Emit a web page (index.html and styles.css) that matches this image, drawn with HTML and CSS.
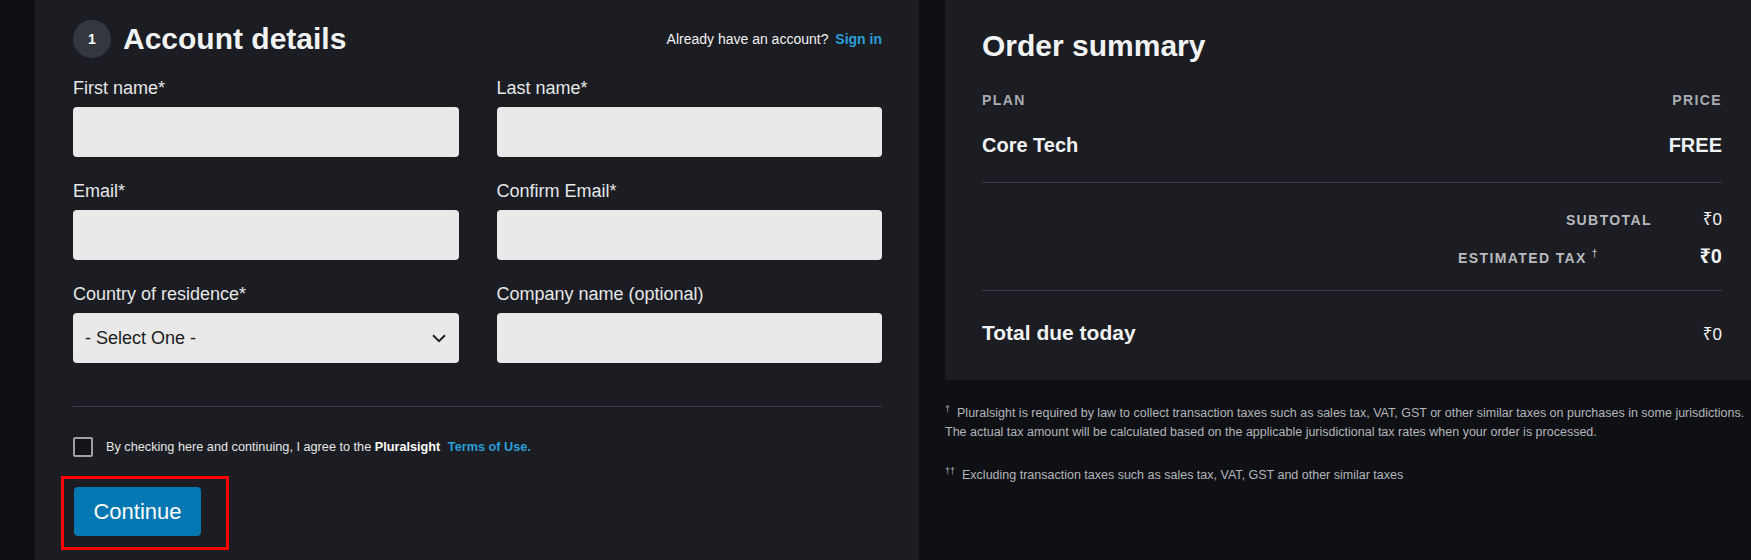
FILE: index.html
```html
<!DOCTYPE html>
<html lang="en">
<head>
    <meta charset="UTF-8">
    <title>Checkout - Account details</title>
    <link rel="stylesheet" href="styles.css">
</head>
<body>
    <div class="page">
        <section class="account">
            <div class="account-head">
                <h2 class="step-title"><span class="step-num">1</span>Account details</h2>
                <p class="signin-hint">Already have an account? <a href="#">Sign in</a></p>
            </div>
            <form class="account-form">
                <div class="fields">
                    <div class="field">
                        <label>First name*</label>
                        <input type="text">
                    </div>
                    <div class="field">
                        <label>Last name*</label>
                        <input type="text">
                    </div>
                    <div class="field">
                        <label>Email*</label>
                        <input type="text">
                    </div>
                    <div class="field">
                        <label>Confirm Email*</label>
                        <input type="text">
                    </div>
                    <div class="field">
                        <label>Country of residence*</label>
                        <div class="select">
                            <span>- Select One -</span>
                            <svg width="14" height="9" viewBox="0 0 14 9"><path d="M1 1.2 L7 7.2 L13 1.2" fill="none" stroke="#1d1f23" stroke-width="2"/></svg>
                        </div>
                    </div>
                    <div class="field">
                        <label>Company name (optional)</label>
                        <input type="text">
                    </div>
                </div>
                <hr class="divider">
                <div class="agree">
                    <span class="checkbox"></span>
                    <span>By checking here and continuing, I agree to the <strong>Pluralsight</strong> <a href="#">Terms of Use.</a></span>
                </div>
                <div class="highlight">
                    <button type="button" class="btn-continue">Continue</button>
                </div>
            </form>
        </section>
        <aside class="summary-col">
            <div class="summary">
                <h2>Order summary</h2>
                <div class="summary-head">
                    <span>PLAN</span>
                    <span>PRICE</span>
                </div>
                <div class="plan-row">
                    <span>Core Tech</span>
                    <span>FREE</span>
                </div>
                <div class="totals">
                    <div class="total-line">
                        <span class="label">SUBTOTAL</span>
                        <span class="amount">₹0</span>
                    </div>
                    <div class="total-line tax">
                        <span class="label">ESTIMATED TAX<sup>†</sup></span>
                        <span class="amount">₹0</span>
                    </div>
                </div>
                <div class="total-row">
                    <span>Total due today</span>
                    <span class="amount">₹0</span>
                </div>
            </div>
            <div class="notes">
                <p><sup>†</sup>Pluralsight is required by law to collect transaction taxes such as sales tax, VAT, GST or other similar taxes on purchases in some jurisdictions.<br>The actual tax amount will be calculated based on the applicable jurisdictional tax rates when your order is processed.</p>
                <p><sup>††</sup>Excluding transaction taxes such as sales tax, VAT, GST and other similar taxes</p>
            </div>
        </aside>
    </div>
</body>
</html>
```

FILE: styles.css
```css
* {
    box-sizing: border-box;
}
body {
    margin: 0;
    background: #0f1014;
    font-family: "Liberation Sans", "Noto Sans", "DejaVu Sans", sans-serif;
    color: #e8e9ea;
    overflow: hidden;
}
.page {
    display: flex;
    align-items: flex-start;
    height: 560px;
    padding-left: 35px;
}

/* left: account form */
.account {
    flex: 0 0 884px;
    height: 560px;
    background: #1b1d22;
    padding: 20px 37px 0 38px;
}
.account-head {
    display: flex;
    justify-content: space-between;
    align-items: center;
    height: 38px;
}
.step-title {
    display: flex;
    align-items: center;
    gap: 12px;
    margin: 0;
    font-size: 30px;
    line-height: 38px;
    color: #f1f2f3;
}
.step-num {
    width: 38px;
    height: 38px;
    border-radius: 50%;
    background: #33383f;
    display: flex;
    align-items: center;
    justify-content: center;
    font-size: 14px;
    color: #fff;
}
.signin-hint {
    margin: 0;
    font-size: 14px;
    color: #f2f2f2;
}
.signin-hint a {
    color: #2a9fd8;
    font-weight: bold;
    text-decoration: none;
    margin-left: 3px;
}
.fields {
    display: grid;
    grid-template-columns: 1fr 1fr;
    column-gap: 38px;
    row-gap: 24px;
    margin-top: 20px;
}
.field label {
    display: block;
    font-size: 18px;
    line-height: 20px;
    margin-bottom: 9px;
    color: #e6e7e8;
}
.field input,
.select {
    display: block;
    width: 100%;
    height: 50px;
    border: 0;
    border-radius: 4px;
    background: #e8e9e8;
}
.select {
    display: flex;
    align-items: center;
    justify-content: space-between;
    padding: 0 13px 0 12px;
    font-size: 18px;
    color: #1b1d22;
}
.divider {
    border: 0;
    border-top: 1px solid #3a3d44;
    margin: 43px 0 0;
}
.agree {
    display: flex;
    align-items: center;
    gap: 13px;
    margin-top: 30px;
    font-size: 12.7px;
    color: #e6e7e8;
}
.checkbox {
    width: 20px;
    height: 20px;
    border: 2px solid #9fa1a4;
    border-radius: 2px;
    background: #131418;
}
.agree strong {
    color: #fff;
    margin-right: 4px;
}
.agree a {
    color: #2a9fd8;
    font-weight: bold;
    text-decoration: none;
}
.highlight {
    display: inline-block;
    margin: 19px 0 0 -12px;
    border: 3px solid #ff0000;
    padding: 8px 25px 11px 10px;
}
.btn-continue {
    display: block;
    width: 127px;
    height: 49px;
    border: 0;
    border-radius: 4px;
    background: #0277b1;
    color: #fff;
    font-family: inherit;
    font-size: 22px;
}

/* right: order summary */
.summary-col {
    flex: 0 0 814px;
    margin-left: 26px;
}
.summary {
    background: #1b1d22;
    padding: 28px 37px 33px;
    border-radius: 0 0 4px 4px;
}
.summary h2 {
    margin: 0;
    font-size: 30px;
    line-height: 36px;
    color: #f1f2f3;
}
.summary-head {
    display: flex;
    justify-content: space-between;
    margin-top: 28px;
    font-size: 14px;
    line-height: 17px;
    font-weight: bold;
    letter-spacing: 1.4px;
    color: #a9acb1;
}
.plan-row {
    display: flex;
    justify-content: space-between;
    margin-top: 24px;
    padding-bottom: 25px;
    border-bottom: 1px solid #3a3d44;
    font-size: 20px;
    line-height: 24px;
    font-weight: bold;
    color: #f1f2f3;
}
.totals {
    padding: 25px 0 20px;
    border-bottom: 1px solid #3a3d44;
}
.total-line {
    display: flex;
    justify-content: flex-end;
    align-items: baseline;
    line-height: 24px;
}
.total-line + .total-line {
    margin-top: 10px;
}
.total-line .label {
    font-size: 14px;
    font-weight: bold;
    letter-spacing: 1.4px;
    color: #b8babe;
}
.total-line .amount {
    min-width: 50px;
    margin-left: 20px;
    text-align: right;
    font-size: 17px;
    color: #f1f2f3;
}
.tax .label {
    margin-right: 82px;
}
.tax .label sup {
    font-size: 10px;
    margin-left: 5px;
    letter-spacing: 0;
}
.tax .amount {
    font-size: 20px;
    font-weight: bold;
    min-width: 0;
}
.total-row {
    display: flex;
    justify-content: space-between;
    align-items: baseline;
    padding-top: 30px;
    font-size: 21px;
    line-height: 24px;
    font-weight: bold;
    color: #f1f2f3;
}
.total-row .amount {
    font-size: 17px;
    font-weight: normal;
}
.notes {
    margin-top: 24px;
    font-size: 12.5px;
    line-height: 19px;
    color: #b3b6ba;
    white-space: nowrap;
}
.notes p {
    margin: 0 0 24px;
}
.notes sup {
    font-size: 9px;
    margin-right: 7px;
    vertical-align: 5px;
    line-height: 0;
}
```
